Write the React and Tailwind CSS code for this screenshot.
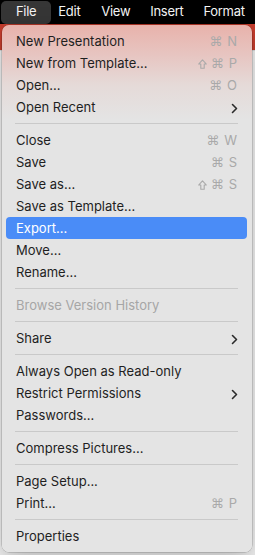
import { Fragment } from "react"

const items = [
  { label: "New Presentation", keys: ["⌘", "N"] },
  { label: "New from Template...", keys: ["⇧", "⌘", "P"] },
  { label: "Open...", keys: ["⌘", "O"] },
  { label: "Open Recent", sub: true },
  { sep: true },
  { label: "Close", keys: ["⌘", "W"] },
  { label: "Save", keys: ["⌘", "S"] },
  { label: "Save as...", keys: ["⇧", "⌘", "S"] },
  { label: "Save as Template..." },
  { label: "Export...", active: true },
  { label: "Move..." },
  { label: "Rename..." },
  { sep: true },
  { label: "Browse Version History", disabled: true },
  { sep: true },
  { label: "Share", sub: true },
  { sep: true },
  { label: "Always Open as Read-only" },
  { label: "Restrict Permissions", sub: true },
  { label: "Passwords..." },
  { sep: true },
  { label: "Compress Pictures..." },
  { sep: true },
  { label: "Page Setup..." },
  { label: "Print...", keys: ["⌘", "P"] },
  { sep: true },
  { label: "Properties" },
]

function Chevron() {
  return (
    <svg width="7" height="11" viewBox="0 0 7 11" className="mr-[-1px]">
      <path d="M1.5 1.5l4 4-4 4" fill="none" stroke="#2a2a2a" strokeWidth="1.6" strokeLinecap="round" strokeLinejoin="round" />
    </svg>
  )
}

function Shift() {
  return (
    <svg width="9" height="10" viewBox="0 0 9 10">
      <path d="M4.5 0.8L8.3 5H6.2v4.2H2.8V5H0.7z" fill="none" stroke="#a9a9a9" strokeWidth="1.1" strokeLinejoin="round" />
    </svg>
  )
}

export default function App() {
  return (
    <div className="relative w-[255px] h-[555px] overflow-hidden bg-[#f2f2f2] font-['Inter','Liberation_Sans',sans-serif]">
      {/* menu bar */}
      <div className="flex items-center h-[24px] bg-black pl-[1px] text-[#f5f5f5] text-[13px] font-normal tracking-[-0.3px] whitespace-nowrap">
        <div className="flex items-center h-[23px] px-[15px] rounded-[5px] bg-[#363636]">File</div>
        <span className="ml-[7px]">Edit</span>
        <span className="ml-[21px]">View</span>
        <span className="ml-[20px]">Insert</span>
        <span className="ml-[20px]">Format</span>
      </div>

      {/* app window behind */}
      <div className="h-[26px] bg-[#c63d2d]" />
      <div className="h-px bg-[#d9d9d9]" />

      {/* file menu */}
      <div className="absolute left-[2px] top-[25px] w-[250px] rounded-[7px] bg-[linear-gradient(to_bottom,#e8b2ab_0px,#e7c5c1_30px,#e5dad8_60px,#e4e4e4_95px)] shadow-[0_0_0_0.5px_rgba(0,0,0,0.25),0_8px_24px_rgba(0,0,0,0.25)] pt-[5px] pb-[5px] pl-[4px] pr-[5px]">
        {items.map((it, i) =>
          it.sep ? (
            <div key={i} className="h-[11px] flex items-center px-[9px]">
              <div className="h-px w-full bg-[#c9c9c9]" />
            </div>
          ) : (
            <div
              key={i}
              className={
                "h-[22px] flex items-center justify-between pt-[2px] pl-[10px] pr-[10px] rounded-[4px] text-[13px] " +
                (it.active ? "bg-[#4a8cf7] text-white" : it.disabled ? "text-[#a6a6a6]" : "text-[#1f1f1f]")
              }
            >
              <span>{it.label}</span>
              {it.keys && (
                <span className="flex items-center gap-[4px] text-[#a9a9a9] text-[13px] font-['DejaVu_Sans','Inter',sans-serif]">
                  {it.keys.map((k, j) => (
                    <Fragment key={j}>
                      {k === "⇧" ? (
                        <Shift />
                      ) : (
                        <span className={/[A-Z]/.test(k) ? "font-['Inter',sans-serif] ml-[1px]" : "text-[13px]"}>{k}</span>
                      )}
                    </Fragment>
                  ))}
                </span>
              )}
              {it.sub && <Chevron />}
            </div>
          )
        )}
      </div>
    </div>
  )
}
